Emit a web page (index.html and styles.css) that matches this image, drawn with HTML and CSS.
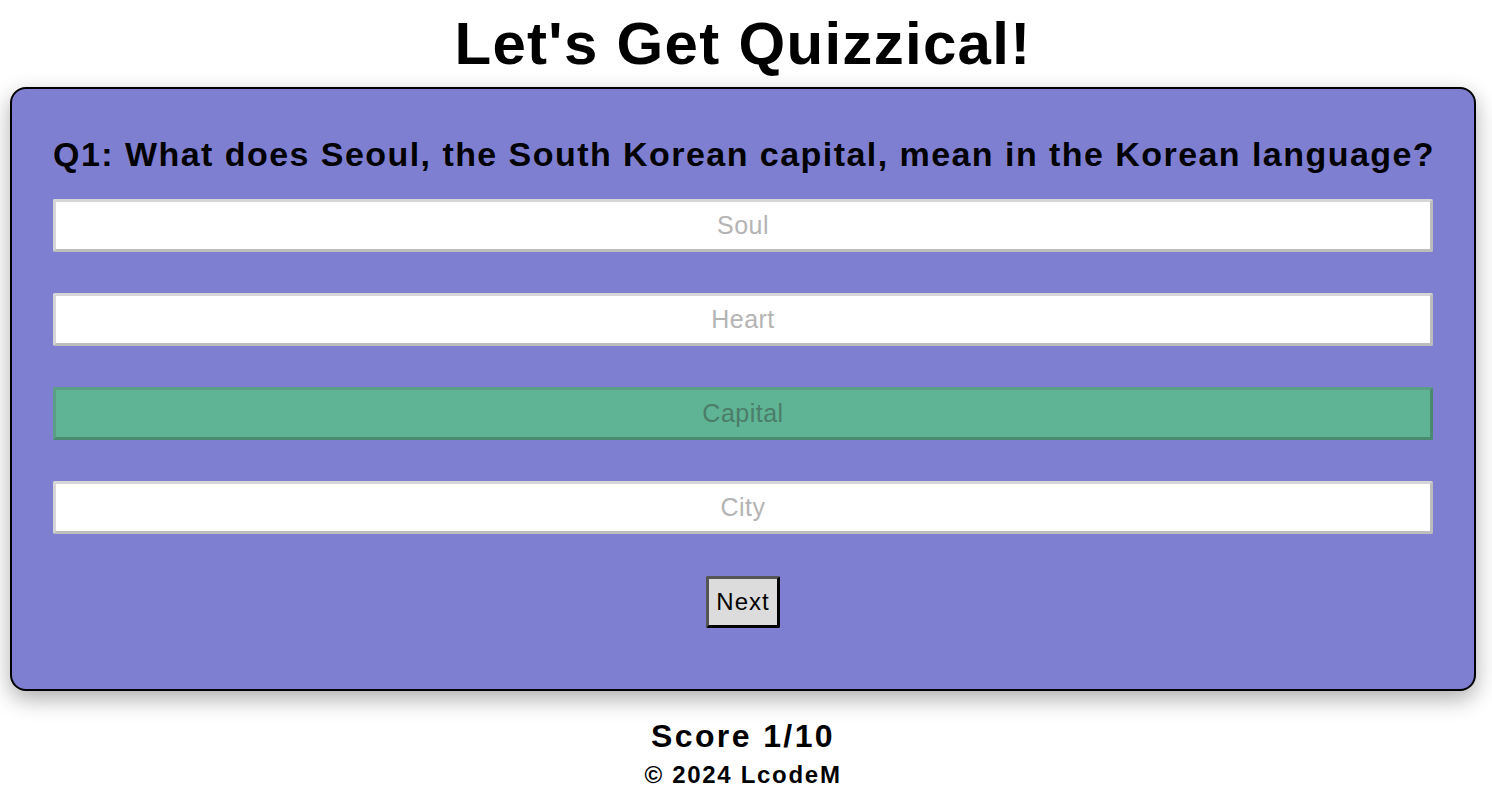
FILE: index.html
```html
<!DOCTYPE html>
<html lang="en">
<head>
<meta charset="utf-8">
<title>Quizzical</title>
<link rel="stylesheet" href="styles.css">
</head>
<body>
  <h1 class="title">Let's Get Quizzical!</h1>
  <main class="card">
    <h2 class="question">Q1: What does Seoul, the South Korean capital, mean in the Korean language?</h2>
    <div class="answers">
      <button class="answer">Soul</button>
      <button class="answer">Heart</button>
      <button class="answer answer-correct">Capital</button>
      <button class="answer">City</button>
    </div>
    <button class="next">Next</button>
  </main>
  <footer class="footer">
    <div class="score">Score 1/10</div>
    <div class="copy">© 2024 LcodeM</div>
  </footer>
</body>
</html>
```
FILE: styles.css
```css
* { box-sizing: border-box; }

html, body {
  margin: 0;
  background: #ffffff;
}

body {
  font-family: "Liberation Sans", Arial, sans-serif;
  color: #000;
  padding: 0 16px 0 10px;
}

.title {
  margin: 0;
  height: 87px;
  padding-top: 10px;
  font-size: 60px;
  line-height: 68px;
  font-weight: 700;
  letter-spacing: 1.3px;
  text-align: center;
}

.card {
  background: #7f7fd2;
  border: 2px solid #000;
  border-radius: 16px;
  box-shadow: 0 8px 22px rgba(0, 0, 0, 0.32);
  padding: 45px 41px 61px;
  display: flex;
  flex-direction: column;
  align-items: center;
}

.question {
  margin: 0 0 25px;
  width: 100%;
  font-size: 34px;
  line-height: 40px;
  font-weight: 700;
  letter-spacing: 1.45px;
  text-align: center;
  white-space: nowrap;
}

.answers {
  width: 100%;
  display: flex;
  flex-direction: column;
  gap: 41px;
}

.answer {
  display: block;
  width: 100%;
  height: 53px;
  background: #ffffff;
  border: 3px solid;
  border-color: #d6d6d6 #bdbdbd #bdbdbd #d6d6d6;
  border-radius: 2px;
  font-family: "Liberation Sans", Arial, sans-serif;
  font-size: 25px;
  letter-spacing: 0.5px;
  color: #b4b4b4;
  text-align: center;
  padding: 0;
}

.answer-correct {
  background: #5fb495;
  border-color: #5a9f85 #4a8a6e #4a8a6e #5a9f85;
  color: #4b7d68;
}

.next {
  margin-top: 42px;
  width: 74px;
  height: 52px;
  background: #dcdcdc;
  border: 3px solid;
  border-color: #555555 #000000 #000000 #555555;
  border-radius: 2px;
  font-family: "Liberation Sans", Arial, sans-serif;
  font-size: 24px;
  letter-spacing: 1px;
  color: #000;
  padding: 0;
}

.footer {
  text-align: center;
  padding-top: 25px;
  font-weight: 700;
}

.score {
  font-size: 32px;
  line-height: 40px;
  letter-spacing: 2.4px;
}

.copy {
  margin-top: 5px;
  font-size: 24px;
  line-height: 28px;
  letter-spacing: 1.7px;
}
```
